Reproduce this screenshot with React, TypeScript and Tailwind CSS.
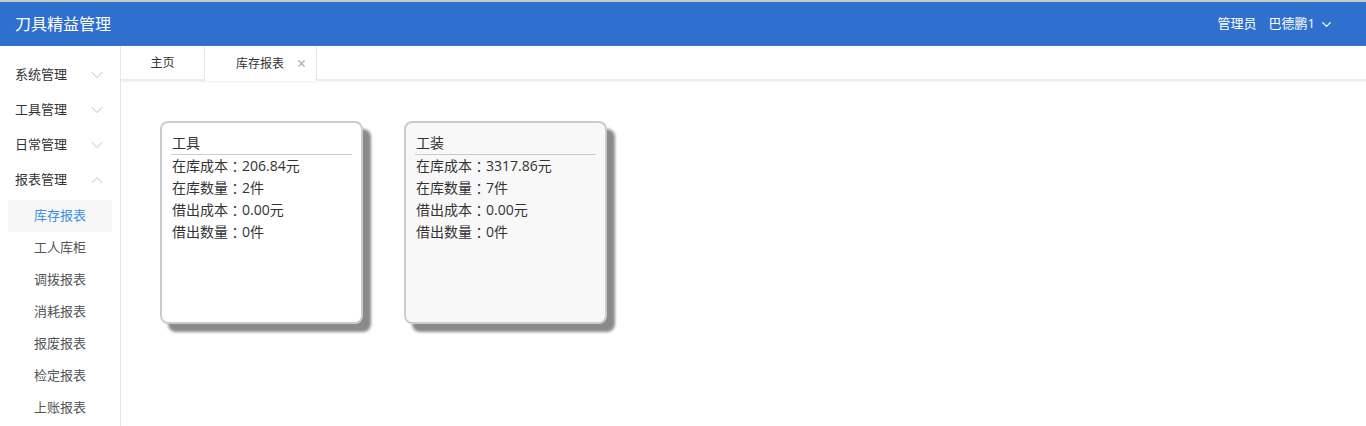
import { ChevronDown, ChevronUp, X } from "lucide-react";

const menus = [
  { name: "系统管理", open: false },
  { name: "工具管理", open: false },
  { name: "日常管理", open: false },
  { name: "报表管理", open: true },
];

const reports = ["库存报表", "工人库柜", "调拨报表", "消耗报表", "报废报表", "检定报表", "上账报表"];

const cards = [
  { title: "工具", cost: "206.84", qty: "2", bg: "bg-white" },
  { title: "工装", cost: "3317.86", qty: "7", bg: "bg-[#f8f8f8]" },
];

function Row({ label, value }: { label: string; value: string }) {
  return (
    <div className="h-[22px] flex items-center whitespace-nowrap">
      <span>{label}</span>
      <span className="font-['Noto_Sans_CJK_JP',sans-serif] leading-none">：</span>
      <span>{value}</span>
    </div>
  );
}

function StockCard({ title, cost, qty, bg }: { title: string; cost: string; qty: string; bg: string }) {
  return (
    <div className={`w-[203px] h-[203px] rounded-lg border-2 border-[#cccccc] ${bg} shadow-[8px_8px_3px_#8a8a8a] px-[9px] pt-[9px] text-[14px] leading-[22px] text-[#333]`}>
      <div className="border-b border-[#cccccc] px-[1px]">{title}</div>
      <div className="px-[1px]">
        <Row label="在库成本" value={`${cost}元`} />
        <Row label="在库数量" value={`${qty}件`} />
        <Row label="借出成本" value="0.00元" />
        <Row label="借出数量" value="0件" />
      </div>
    </div>
  );
}

export default function App() {
  return (
    <div className="h-[426px] w-full flex flex-col bg-white font-['Open_Sans','Noto_Sans_CJK_SC',sans-serif] text-[#333] overflow-hidden">
      <header className="h-[46px] shrink-0 border-t-2 border-[#c9c9c9] bg-[#2f6fcd] flex items-center justify-between pl-[15px] pr-[32px] text-white">
        <div className="text-[16px]">刀具精益管理</div>
        <div className="flex items-center text-[13px]">
          <span>管理员</span>
          <span className="ml-3">巴德鹏1</span>
          <ChevronDown className="ml-1 w-[15px] h-[15px]" strokeWidth={2} />
        </div>
      </header>

      <div className="flex flex-1 min-h-0">
        <aside className="w-[121px] shrink-0 border-r border-[#e4e4e4] pt-[11px] text-[13px]">
          {menus.map((m) => (
            <div key={m.name} className="h-[35px] flex items-center justify-between pl-[15px] pr-[13px]">
              <span>{m.name}</span>
              {m.open ? (
                <ChevronUp className="w-[20px] h-[20px] text-[#b8b8b8]" strokeWidth={1.1} />
              ) : (
                <ChevronDown className="w-[20px] h-[20px] text-[#b8b8b8]" strokeWidth={1.1} />
              )}
            </div>
          ))}
          <div className="mt-[3px] flex flex-col">
            {reports.map((r, i) => (
              <div
                key={r}
                className={`h-8 mx-2 flex items-center pl-[26px] ${i === 0 ? "bg-[#f7f7f7] text-[#3a8ee6]" : "text-[#555]"}`}
              >
                {r}
              </div>
            ))}
          </div>
        </aside>

        <main className="flex-1 flex flex-col">
          <div className="h-[35px] flex border-b-2 border-[#ececec] shadow-[0_1px_2px_#f2f2f2] text-[12px]">
            <div className="w-[83px] flex items-center justify-center text-[#333]">主页</div>
            <div className="w-[113px] flex items-center pl-[31px] bg-white border-x border-[#e6e6e6] -mb-[2px] text-[#333]">
              <span>库存报表</span>
              <X className="ml-[12px] w-[11px] h-[11px] text-[#aaaaaa]" strokeWidth={2.5} />
            </div>
          </div>
          <div className="flex gap-[41px] pl-[39px] pt-[40px]">
            {cards.map((c) => (
              <StockCard key={c.title} {...c} />
            ))}
          </div>
        </main>
      </div>
    </div>
  );
}
